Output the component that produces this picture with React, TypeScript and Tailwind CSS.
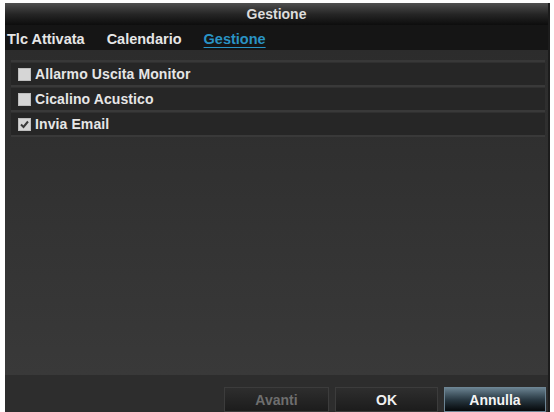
import React from "react";

const font = { fontFamily: '"Liberation Sans", Arial, sans-serif' };

function Check({ checked }: { checked?: boolean }) {
  return (
    <div className="w-[13px] h-[13px] bg-[#d6d6d6] border border-[#bdbdbd] flex items-center justify-center shrink-0">
      {checked && (
        <svg width="11" height="11" viewBox="0 0 11 11">
          <path d="M2 5.5 L4.5 8 L9 2.5" stroke="#3a3a3a" strokeWidth="2" fill="none" />
        </svg>
      )}
    </div>
  );
}

function Row({ label, checked }: { label: string; checked?: boolean }) {
  return (
    <div className="h-[25px] bg-[#262626] border-t border-[#303030] border-b-2 border-b-[#393939] flex items-center pl-[7px] gap-[4px]">
      <Check checked={checked} />
      <span className="text-[14px] font-bold text-[#e6e6e6] leading-none tracking-[0.1px]">{label}</span>
    </div>
  );
}

export default function App() {
  return (
    <div className="w-[554px] h-[412px] bg-white overflow-hidden" style={font}>
      <div className="ml-[5px] mt-[3px] w-[545px] h-[409px] bg-[#2c2c2c] flex flex-col border-r-2 border-[#1c1c1c]">
        <div className="h-[22px] bg-gradient-to-b from-[#505050] via-[#262626] to-[#0d0d0d] flex items-center justify-center">
          <span className="text-[14px] font-bold text-[#dcdcdc] leading-none">Gestione</span>
        </div>
        <div className="h-[25px] bg-[#151515] flex items-end pb-[4px] pl-[2px] gap-[22px]">
          <span className="text-[14.5px] font-bold text-[#e6e6e6] leading-none">Tlc Attivata</span>
          <span className="text-[14.5px] font-bold text-[#e6e6e6] leading-none">Calendario</span>
          <span className="text-[14.5px] font-bold text-[#2a93c4] leading-none underline underline-offset-[3px]">Gestione</span>
        </div>
        <div className="flex-1 flex flex-col bg-gradient-to-b from-[#2c2c2c] to-[#393939] pl-[6px] pr-[3px]">
          <div className="h-[12px] border-b-2 border-[#383838]" />
          <Row label="Allarmo Uscita Monitor" />
          <Row label="Cicalino Acustico" />
          <Row label="Invia Email" checked />
        </div>
        <div className="h-[37px] bg-[#2d2d2d] flex items-end justify-end gap-[6px] pr-[2px]">
          <div className="w-[105px] h-[25px] bg-gradient-to-b from-[#2e2e2e] to-[#1c1c1c] border border-[#3c3c3c] flex items-center justify-center">
            <span className="text-[14px] font-bold text-[#6e6e6e] leading-none">Avanti</span>
          </div>
          <div className="w-[103px] h-[25px] bg-gradient-to-b from-[#2e2e2e] to-[#1c1c1c] border border-[#3c3c3c] flex items-center justify-center">
            <span className="text-[14px] font-bold text-[#f0f0f0] leading-none">OK</span>
          </div>
          <div className="w-[102px] h-[25px] bg-gradient-to-b from-[#6a8290] via-[#2a3a44] to-[#06090b] border border-[#6d8594] flex items-center justify-center">
            <span className="text-[14px] font-bold text-[#f4f4f4] leading-none">Annulla</span>
          </div>
        </div>
      </div>
    </div>
  );
}
